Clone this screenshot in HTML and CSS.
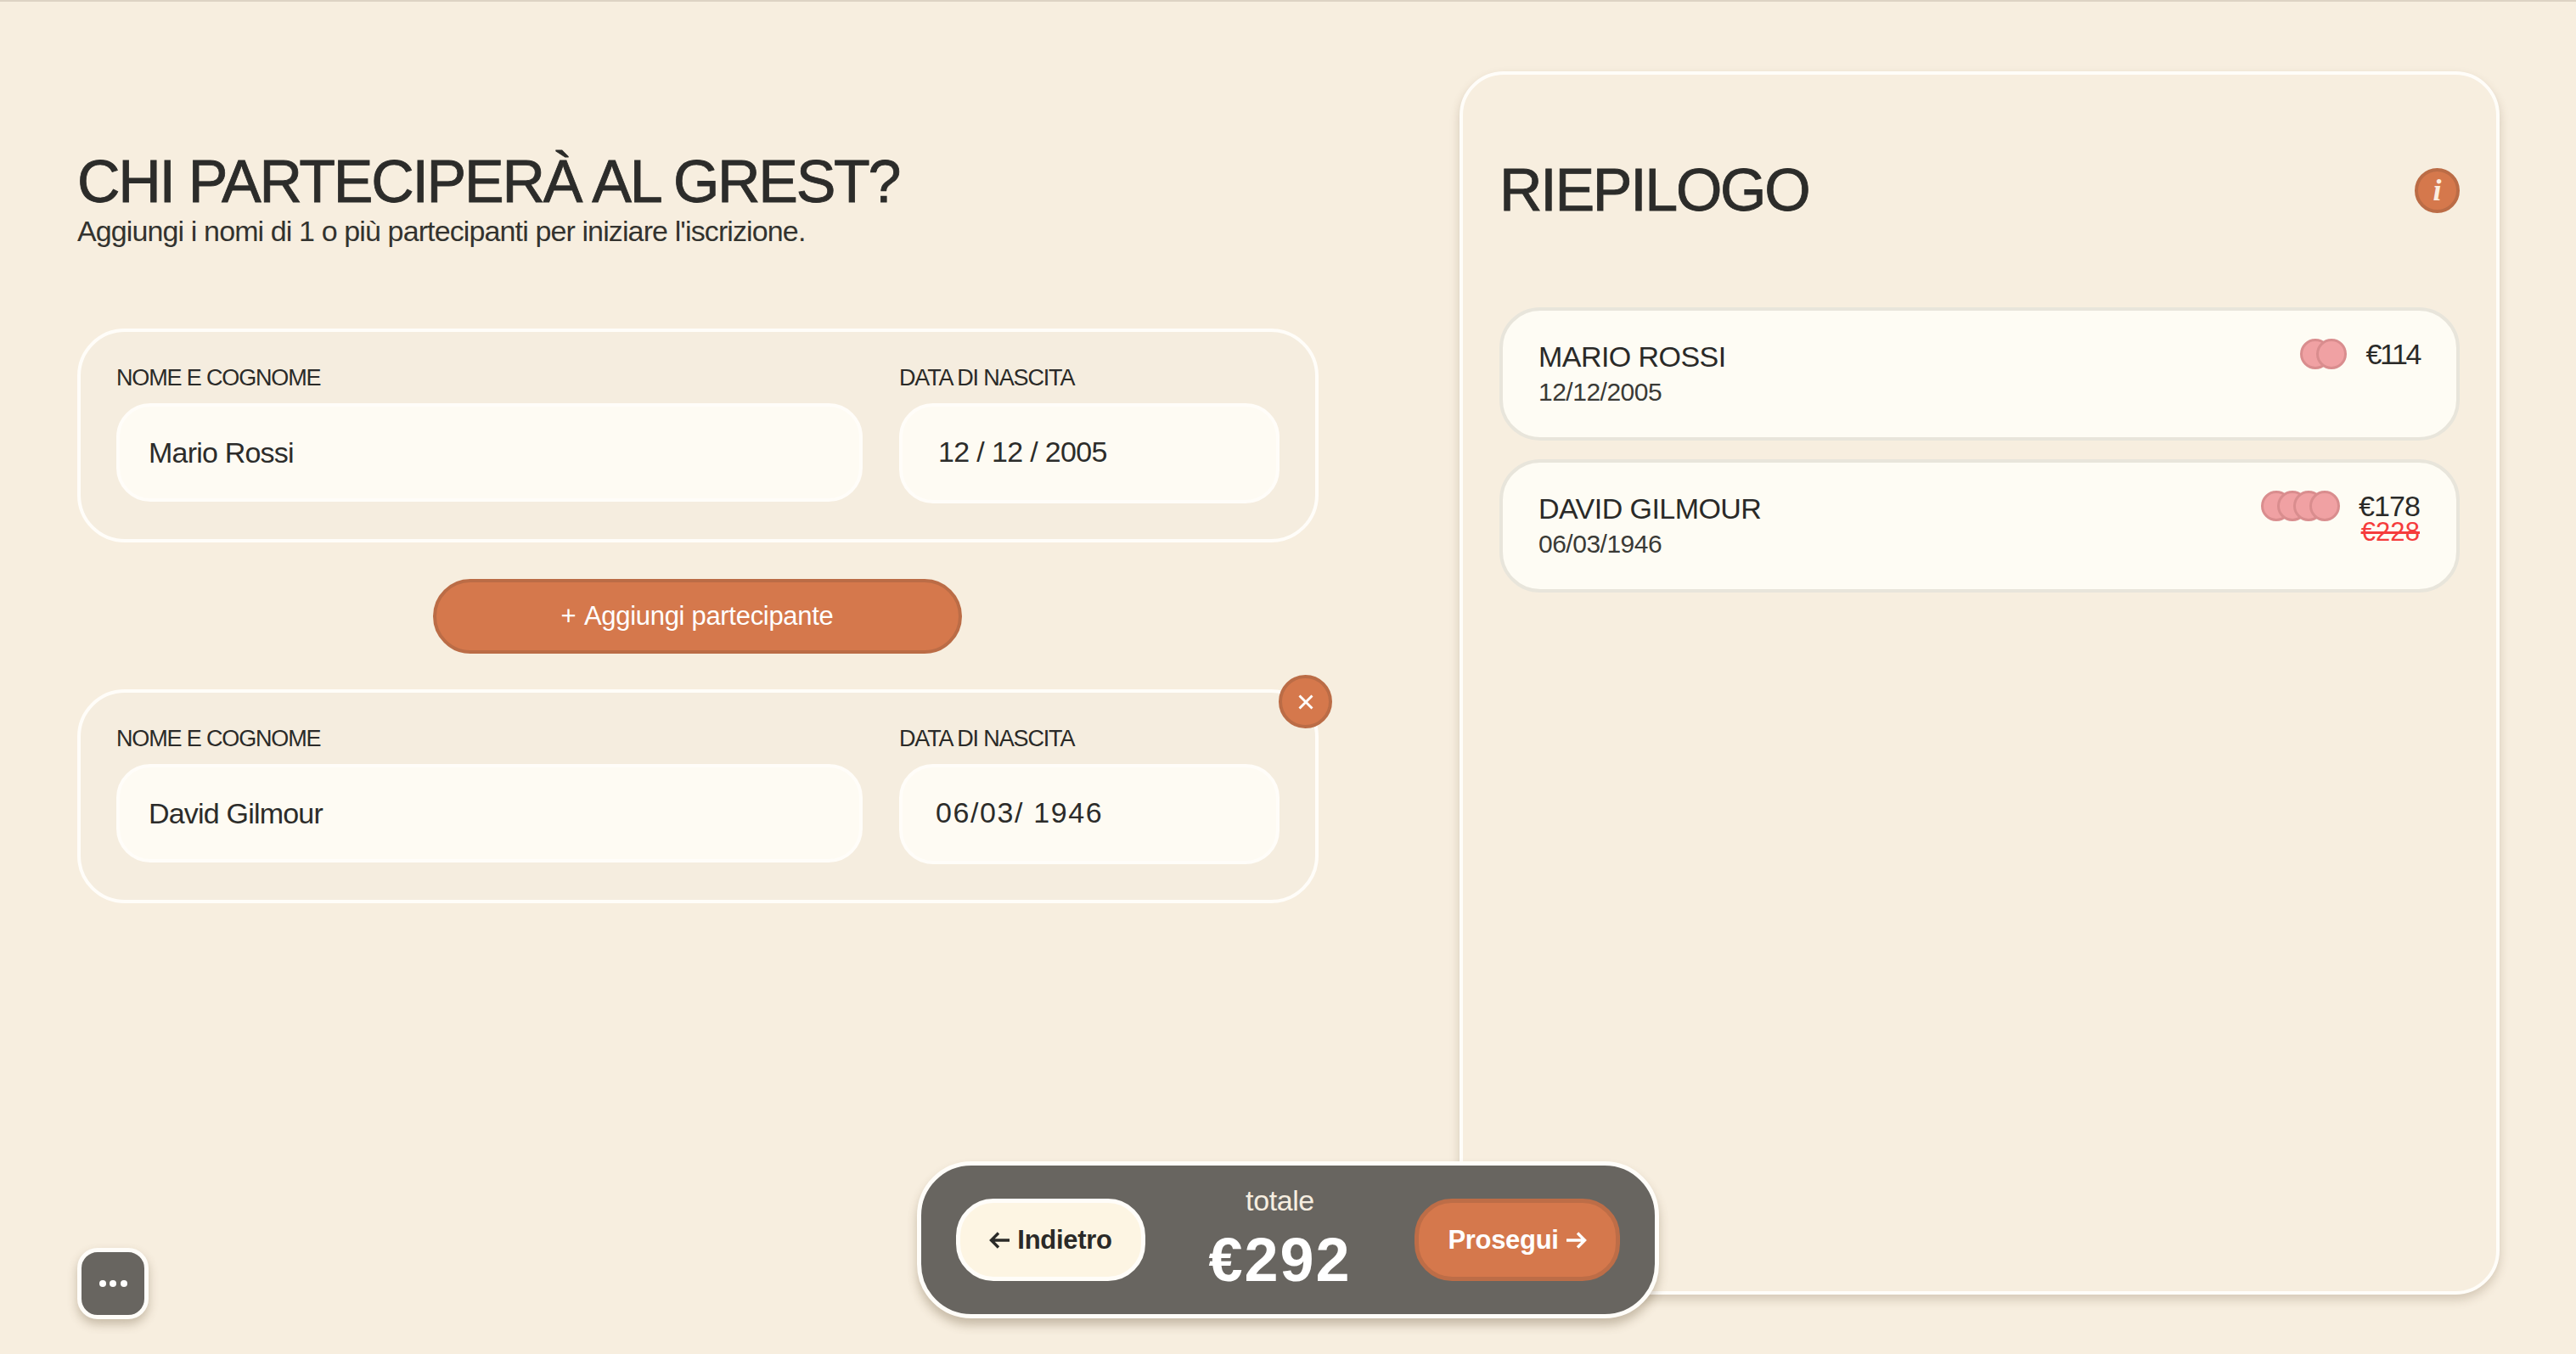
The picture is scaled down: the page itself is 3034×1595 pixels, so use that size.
FILE: index.html
```html
<!DOCTYPE html>
<html lang="it">
<head>
<meta charset="utf-8">
<title>Iscrizione Grest</title>
<link rel="stylesheet" href="styles.css">
</head>
<body>
<div class="page">
  <main class="form-col">
    <h1 class="title">CHI PARTECIPERÀ AL GREST?</h1>
    <p class="subtitle">Aggiungi i nomi di 1 o più partecipanti per iniziare l'iscrizione.</p>

    <section class="person">
      <div class="field">
        <div class="label">NOME E COGNOME</div>
        <div class="input">Mario Rossi</div>
      </div>
      <div class="field">
        <div class="label">DATA DI NASCITA</div>
        <div class="input input-date date-a">12 / 12 / 2005</div>
      </div>
    </section>

    <div class="add-row">
      <button class="add-btn"><span class="plus">+</span> Aggiungi partecipante</button>
    </div>

    <section class="person">
      <button class="remove" aria-label="Rimuovi">
        <svg viewBox="0 0 16 16" class="remove-icon"><path d="M3 3l10 10M13 3L3 13"/></svg>
      </button>
      <div class="field">
        <div class="label">NOME E COGNOME</div>
        <div class="input">David Gilmour</div>
      </div>
      <div class="field">
        <div class="label">DATA DI NASCITA</div>
        <div class="input input-date date-b">06/03/ 1946</div>
      </div>
    </section>
  </main>

  <aside class="summary">
    <header class="summary-head">
      <h2 class="summary-title">RIEPILOGO</h2>
      <span class="info">i</span>
    </header>
    <div class="rows">
      <article class="row">
        <div>
          <div class="row-name">MARIO ROSSI</div>
          <div class="row-date">12/12/2005</div>
        </div>
        <div class="row-right">
          <div class="coins"><span class="coin"></span><span class="coin"></span></div>
          <div class="prices"><div class="price price-tight">€114</div></div>
        </div>
      </article>
      <article class="row">
        <div>
          <div class="row-name">DAVID GILMOUR</div>
          <div class="row-date">06/03/1946</div>
        </div>
        <div class="row-right">
          <div class="coins"><span class="coin"></span><span class="coin"></span><span class="coin"></span><span class="coin"></span></div>
          <div class="prices"><div class="price">€178</div><div class="old-price">€228</div></div>
        </div>
      </article>
    </div>
  </aside>
</div>

<nav class="checkout">
  <button class="nav-btn back">
    <svg viewBox="0 0 26 24" class="arrow"><path d="M24 12H3M11 3.500L2.500 12l8.500 8.500"/></svg>
    Indietro
  </button>
  <div class="total">
    <div class="total-label">totale</div>
    <div class="total-value">€292</div>
  </div>
  <button class="nav-btn next">
    Prosegui
    <svg viewBox="0 0 26 24" class="arrow"><path d="M2 12h21M15 3.500l8.500 8.500-8.500 8.500"/></svg>
  </button>
</nav>

<button class="more" aria-label="Altro"><span></span><span></span><span></span></button>
</body>
</html>
```
FILE: styles.css
```css
* { box-sizing: border-box; }
html, body { margin: 0; padding: 0; }
body {
  position: relative;
  width: 3034px;
  height: 1595px;
  overflow: hidden;
  background: #f7eedf;
  border-top: 2px solid #ddd3c4;
  font-family: "Liberation Sans", Arial, sans-serif;
  color: #2c2c2a;
}
button { font-family: inherit; cursor: pointer; padding: 0; }

.page { display: flex; align-items: flex-start; padding-left: 91px; }

.form-col { width: 1462px; padding-top: 174px; }
.title {
  margin: 0;
  font-size: 70px;
  line-height: 76px;
  font-weight: 400;
  letter-spacing: -2.3px;
  -webkit-text-stroke: 0.8px #2c2c2a;
}
.subtitle {
  margin: 0 0 95px;
  font-size: 34px;
  line-height: 40px;
  letter-spacing: -0.88px;
  color: #33332f;
}

.person {
  position: relative;
  display: grid;
  grid-template-columns: 879px 448px;
  column-gap: 43px;
  padding: 38px 42px 44px;
  background: #f5eddf;
  border: 4px solid #fffdf9;
  border-radius: 56px;
}
.label {
  font-size: 27px;
  line-height: 32px;
  letter-spacing: -1.15px;
  margin-bottom: 14px;
  color: #2a2a28;
}
.input {
  display: flex;
  align-items: center;
  height: 116px;
  padding: 0 34px;
  background: #fefbf3;
  border: 4px solid #fffdf9;
  border-radius: 40px;
  font-size: 34px;
  letter-spacing: -0.8px;
}
.input-date { height: 118px; margin-bottom: -2px; padding-bottom: 3px; }
.date-a { padding-left: 42px; letter-spacing: -0.65px; }
.date-b { padding-left: 39px; letter-spacing: 1.6px; }

.add-row { display: flex; justify-content: center; padding: 43px 2px 42px 0; }
.add-btn {
  width: 623px;
  height: 88px;
  background: #d5784c;
  border: 4px solid #bb6c46;
  border-radius: 44px;
  color: #fff;
  font-size: 31px;
  letter-spacing: -0.3px;
}
.plus { margin-right: 3px; }
.remove {
  position: absolute;
  top: -21px;
  right: -20px;
  display: flex;
  align-items: center;
  justify-content: center;
  width: 63px;
  height: 63px;
  background: #d5784c;
  border: 4px solid #bb6c46;
  border-radius: 50%;
}
.remove-icon { width: 24px; height: 24px; fill: none; stroke: #fff; stroke-width: 1.900; }

.summary {
  flex: none;
  width: 1225px;
  height: 1441px;
  margin: 82px 0 0 166px;
  padding: 0 43px 0 43px;
  background: #f7eedf;
  border: 4px solid #fffdf9;
  border-radius: 52px;
  box-shadow: 0 6px 12px rgba(90, 70, 40, 0.22);
}
.summary-head { display: flex; align-items: center; justify-content: space-between; height: 274px; padding-bottom: 2px; }
.summary-title {
  margin: 0;
  font-size: 70px;
  font-weight: 400;
  letter-spacing: -2.3px;
  -webkit-text-stroke: 0.8px #2c2c2a;
}
.info {
  display: flex;
  align-items: center;
  justify-content: center;
  width: 53px;
  height: 53px;
  background: #d5784c;
  border: 4px solid #bb6c46;
  border-radius: 50%;
  color: #fbeee0;
  font-family: "Liberation Serif", serif;
  font-style: italic;
  font-weight: 700;
  font-size: 36px;
  line-height: 1;
}
.rows { display: flex; flex-direction: column; gap: 22px; }
.row {
  display: flex;
  justify-content: space-between;
  height: 157px;
  padding: 34px 43px 0 42px;
  background: #fefcf4;
  border: 4px solid #e8e5db;
  border-radius: 48px;
}
.row-name { font-size: 34px; line-height: 40px; letter-spacing: -0.55px; color: #2a2a28; }
.row-date { font-size: 30px; line-height: 36px; margin-top: 4px; letter-spacing: -0.5px; color: #3a3a36; }
.row-right { display: flex; align-items: flex-start; gap: 22px; margin-top: -1px; }
.coins { display: flex; }
.coin {
  width: 36px;
  height: 36px;
  background: #f0a1a3;
  border: 3px solid #d98d8e;
  border-radius: 50%;
}
.coin + .coin { margin-left: -17px; }
.prices { text-align: right; }
.price { font-size: 34px; line-height: 36px; letter-spacing: -0.9px; color: #2a2a28; }
.price-tight { letter-spacing: -2.4px; }
.old-price {
  font-size: 31px;
  line-height: 26px;
  letter-spacing: 0.1px;
  color: #f53c3c;
  text-decoration: line-through;
}

.checkout {
  position: absolute;
  left: 1080px;
  top: 1366px;
  display: flex;
  align-items: center;
  justify-content: space-between;
  width: 874px;
  height: 185px;
  padding: 0 41px;
  background: #686560;
  border: 5px solid #fffdf9;
  border-radius: 64px;
  box-shadow: 0 8px 12px rgba(90, 70, 40, 0.3);
}
.nav-btn {
  display: flex;
  align-items: center;
  justify-content: center;
  gap: 7px;
  height: 97px;
  border-radius: 44px;
  font-size: 31px;
  font-weight: 700;
  letter-spacing: -0.3px;
}
.back { width: 223px; background: #fdf5e3; border: 5px solid #fffdf9; color: #2a2a28; }
.next { width: 242px; background: #d5784c; border: 5px solid #bd6d47; color: #fff; }
.arrow { width: 26px; height: 24px; fill: none; stroke: currentColor; stroke-width: 3.4; }
.total { text-align: center; color: #fff; width: 200px; margin-top: -6px; }
.total-label { font-size: 34px; line-height: 40px; letter-spacing: -0.4px; margin-bottom: 12px; color: #f6eee0; }
.total-value { font-size: 72px; line-height: 76px; font-weight: 700; letter-spacing: 2px; }

.more {
  position: absolute;
  left: 91px;
  top: 1468px;
  display: flex;
  align-items: center;
  justify-content: center;
  gap: 4.500px;
  width: 84px;
  height: 84px;
  background: #686560;
  border: 5px solid #fffdf9;
  border-radius: 24px;
  box-shadow: 0 6px 12px rgba(90, 70, 40, 0.3);
}
.more span { width: 8px; height: 8px; border-radius: 50%; background: #fff; }
```
